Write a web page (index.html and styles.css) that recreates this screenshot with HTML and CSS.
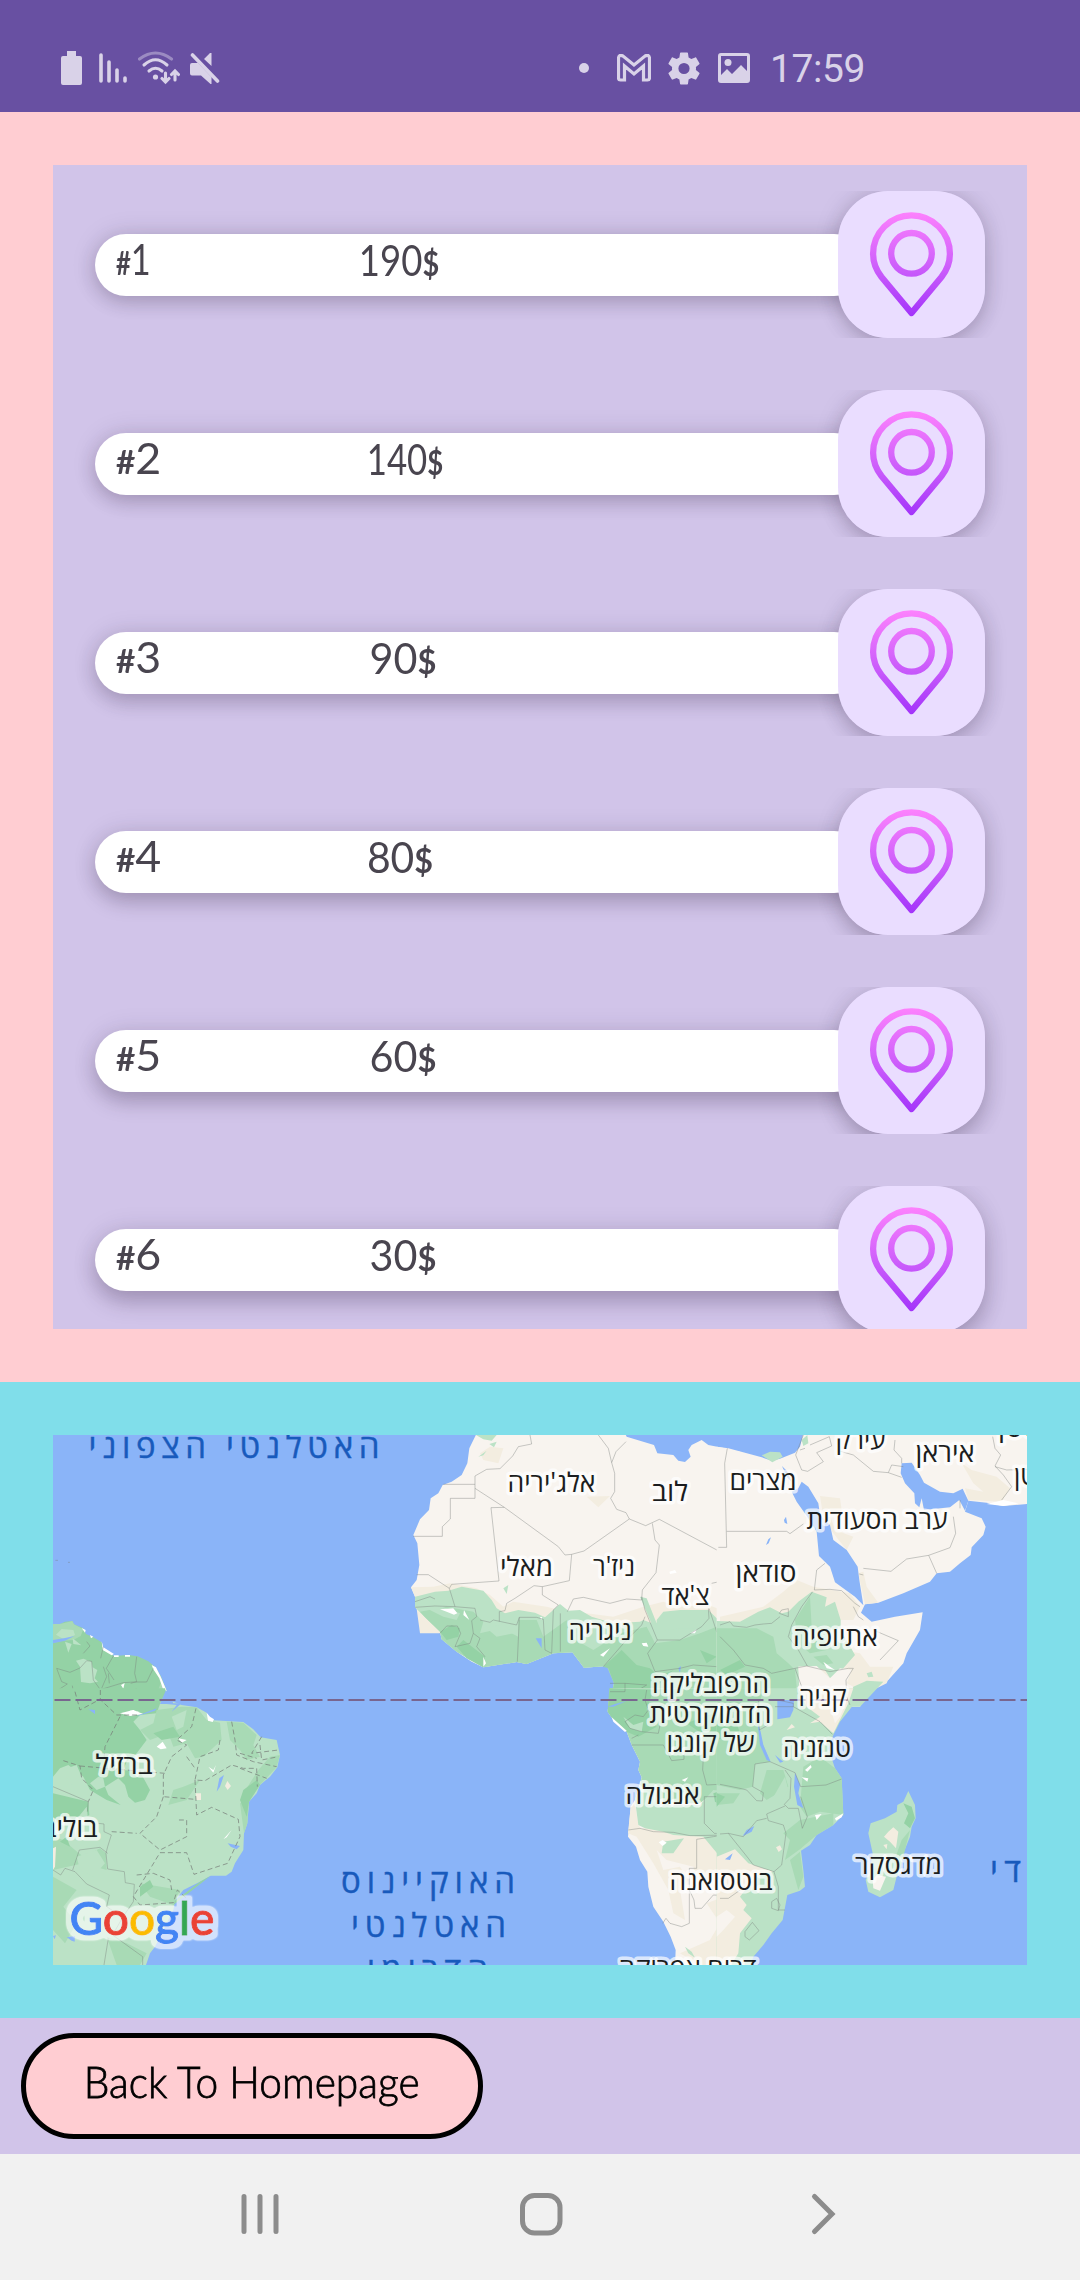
FILE: index.html
```html
<!DOCTYPE html>
<html lang="en">
<head>
<meta charset="utf-8">
<title>Prices</title>
<link rel="stylesheet" href="styles.css">
</head>
<body>
<div class="screen">
  <header class="status">
    <div class="status-left">
      <svg class="ic-battery" viewBox="0 0 21 34" width="21" height="34"><path d="M6 0h9v5h4a2 2 0 0 1 2 2v25a2 2 0 0 1-2 2H2a2 2 0 0 1-2-2V7a2 2 0 0 1 2-2h4z"/></svg>
      <svg class="ic-signal" viewBox="0 0 28 32" width="28" height="32"><path class="ln" d="M2 3v26M10 10v19M18 18v11M26 26v3"/></svg>
      <svg class="ic-wifi" viewBox="0 0 42 34" width="42" height="34"><g class="ln thin"><path opacity=".45" d="M1.500 8Q17.500-4 33.500 8"/><path d="M6 14q11.500-10.500 23 0M11 20q6.500-5.500 13 0"/><path d="M27.500 22v9m-3.500-3.500l3.500 3.500 3.500-3.500M37 29v-9m-3.500 3.500l3.500-3.500 3.500 3.500"/></g><circle cx="17.500" cy="26" r="2.600"/></svg>
      <svg class="ic-mute" viewBox="0 0 30 34" width="30" height="34"><path d="M2 10h6L21.500 24v7h-1L11 22.500H2q-2 0-2-2V12q0-2 2-2zM14 6l6-6h1.500v13z"/><path class="ln" d="M2.500 2l25 26"/></svg>
    </div>
    <div class="status-right">
      <svg class="ic-dot" viewBox="0 0 10 10" width="10" height="10"><circle cx="5" cy="5" r="5"/></svg>
      <svg class="ic-mail" viewBox="0 0 34 28" width="34" height="28"><path class="ln mail" d="M1.500 24V4Q2 0 6 2l11 9L28 2q4-2 4.500 2v20q0 2-2 2h-4V12L17 20 7.500 12v14h-4q-2 0-2-2z"/></svg>
      <svg class="ic-gear" viewBox="2 2 20 20" width="32" height="33"><path d="M19.430 12.980c.04-.32.070-.64.070-.98s-.03-.66-.07-.98l2.110-1.650c.19-.15.240-.42.120-.64l-2-3.460c-.12-.22-.39-.3-.61-.22l-2.490 1c-.52-.4-1.080-.73-1.690-.98l-.38-2.650A.49.490 0 0 0 14 2h-4c-.25 0-.46.180-.49.420l-.38 2.650c-.61.250-1.170.59-1.690.98l-2.490-1c-.23-.09-.49 0-.61.220l-2 3.460c-.13.220-.07.490.12.640l2.110 1.650c-.04.320-.07.650-.07.980s.03.660.070.980l-2.110 1.650c-.19.150-.24.420-.12.640l2 3.460c.12.220.39.300.61.220l2.490-1c.52.400 1.080.73 1.690.98l.38 2.650c.03.240.240.420.49.420h4c.25 0 .46-.18.49-.42l.38-2.650c.61-.25 1.170-.59 1.690-.98l2.490 1c.23.090.49 0 .61-.22l2-3.460c.12-.22.070-.49-.12-.64zM12 15.500a3.500 3.500 0 1 1 0-7 3.500 3.500 0 0 1 0 7z"/></svg>
      <svg class="ic-image" viewBox="0 0 32 30" width="32" height="30"><path fill-rule="evenodd" d="M3 0h26a3 3 0 0 1 3 3v24a3 3 0 0 1-3 3H3a3 3 0 0 1-3-3V3a3 3 0 0 1 3-3zM3 3v19l6-6 5 5 9-9 6 6V3z"/><circle cx="10" cy="9.500" r="3.500"/></svg>
      <span class="clock">17:59</span>
    </div>
  </header>

  <section class="list-area">
    <svg class="defs" width="0" height="0"><defs>
      <linearGradient id="pinFill" gradientUnits="userSpaceOnUse" x1="0" y1="21" x2="0" y2="126"><stop offset="0" stop-color="#fd82fd"/><stop offset=".5" stop-color="#cf60fb"/><stop offset="1" stop-color="#a233fa"/></linearGradient>
      <g id="pin" fill="none" stroke="url(#pinFill)" stroke-width="6.300"><path stroke-linejoin="round" d="M73.500 122L43.500 86C38 79 35.100 71.500 35.100 62.800a38.400 38.400 0 0 1 76.800 0C111.900 71.500 109 79 103.500 86z"/><circle cx="73.500" cy="62.300" r="20.300"/></g>
      <filter id="halo" x="-10%" y="-20%" width="120%" height="140%"><feMorphology in="SourceAlpha" operator="dilate" radius="4"/><feGaussianBlur stdDeviation="1"/><feComponentTransfer result="spread"><feFuncA type="linear" slope="3"/></feComponentTransfer><feFlood flood-color="#fff" flood-opacity=".62"/><feComposite in2="spread" operator="in"/><feMerge><feMergeNode/><feMergeNode in="SourceGraphic"/></feMerge></filter>
    </defs></svg>
    <div class="list">
      <div class="row"><div class="bar e1"><span class="rank r1"><b>#</b>1</span><span class="price">190<i>$</i></span></div><div class="tile e1"><svg viewBox="0 0 147 147"><use href="#pin"/></svg></div></div>
      <div class="row"><div class="bar e2"><span class="rank"><b>#</b>2</span><span class="price p2">140<i>$</i></span></div><div class="tile e2"><svg viewBox="0 0 147 147"><use href="#pin"/></svg></div></div>
      <div class="row"><div class="bar e3"><span class="rank"><b>#</b>3</span><span class="price p3">90<i>$</i></span></div><div class="tile e3"><svg viewBox="0 0 147 147"><use href="#pin"/></svg></div></div>
      <div class="row"><div class="bar e4"><span class="rank"><b>#</b>4</span><span class="price p4">80<i>$</i></span></div><div class="tile e4"><svg viewBox="0 0 147 147"><use href="#pin"/></svg></div></div>
      <div class="row"><div class="bar e5"><span class="rank"><b>#</b>5</span><span class="price p3">60<i>$</i></span></div><div class="tile e5"><svg viewBox="0 0 147 147"><use href="#pin"/></svg></div></div>
      <div class="row"><div class="bar e6"><span class="rank"><b>#</b>6</span><span class="price p3">30<i>$</i></span></div><div class="tile e6"><svg viewBox="0 0 147 147"><use href="#pin"/></svg></div></div>
    </div>
  </section>

  <section class="map-area">
    <svg class="map" viewBox="53 1435 974 530" width="974" height="530">
      <rect class="sea" x="53" y="1435" width="974" height="530"/>
      <!-- northern South America -->
      <g transform="translate(40 1420) scale(.33333)">
        <path class="g3" d="M39 612L60 612 75 605 97 603 102 613 130 625 138 642 160 652 185 667 190 685 215 703 222 708 265 705 293 709 325 724 345 740 362 768 380 812 370 860 39 860z"/>
        <path class="g2" d="M39 612L60 612 97 603 102 613 130 628 122 648 100 660 70 662 39 668z"/>
        <path class="g1" d="M48 644L65 627 100 630 105 645 75 660zM75 665L95 672 85 698zM98 655L124 676 100 672zM108 722L130 716 155 725 158 742 172 750 164 775 174 785 150 790 123 786 120 740z"/>
        <path class="g2" d="M345 740L362 768 380 812 365 840 345 835 362 790z"/>
        <path class="w" d="M125 624L137 630 135 638zM150 645L160 650 153 655zM185 664L190 682 222 702 215 706 188 690zM222 706h14v5h-14zM255 705h15v5h-15zM335 735L348 742 362 770 380 812 374 822 358 775 340 748zM243 795L254 789 250 806z"/>
        <path class="sea" d="M39 660L75 654 103 648 75 662 39 670z"/>
        <path class="bd" d="M50 745L90 757 120 744 140 722 155 724 160 780 181 809 250 788 280 786 320 786 340 745M130 700L150 678 140 665M190 680L182 715M220 708L199 745 222 780M190 740L200 770 185 805M290 710L284 760 290 785 272 790M50 745L65 785 82 792 39 820M181 809V840M97 797L102 830M288 805L310 836M205 760L208 790M46 421h8M84 427h6"/>
      </g>
      <!-- Brazil -->
      <g transform="translate(40 1690) scale(.33333)">
        <path class="g1" d="M39 0L375 0 378 5 370 20 362 36 400 35 425 45 470 52 500 68 510 90 545 92 610 96 640 118 662 142 710 150 720 195 712 232 690 260 660 285 650 310 627 335 622 400 612 430 610 480 585 520 575 545 558 557 512 557 480 575 430 600 405 632 400 660 370 720 345 770 330 790 318 825 39 825z"/>
        <path class="g3" d="M39 -5L375 -5 378 5 362 36 350 70 300 75 280 95 300 120 320 150 290 190 260 215 250 240 300 245 330 300 315 330 285 338 265 320 255 285 235 265 195 290 205 315 242 345 200 330 150 300 130 260 85 225 60 235 39 260zM39 310L145 335 148 375 110 395 85 380 39 405z"/>
        <path class="g2" d="M350 60L425 50 470 52 500 90 540 98 545 150 490 200 465 205 440 160 400 170 385 130 330 150 300 120 340 100zM560 95L610 98 650 135 640 165 660 200 620 210 600 180 570 150zM690 200L720 195 710 232 660 285 627 335 610 310 655 240zM39 440L70 450 105 480 130 500 180 475 198 490 200 540 130 520 39 540zM39 560L110 600 70 650 110 700 75 760 39 720zM200 740L260 760 320 790 300 825 230 825zM300 580L420 600 400 645 330 620zM385 345L440 330 480 270 430 290 400 300zM600 340L627 335 622 400 612 430z"/>
        <path class="g3" d="M610 300L650 270 660 285 627 335 620 380 600 330zM400 645L512 557 480 575 405 632zM340 130L400 110 420 140 365 150zM300 590L330 570 340 590 300 620zM60 455L80 440 90 470z"/>
        <path class="g1" d="M150 280L175 260 190 265 195 290 170 300zM65 240L110 225 125 260 95 285zM395 80L440 60 430 110 410 120zM100 400L140 350 145 400zM110 500L170 480 195 520 160 560 120 540z"/>
        <path class="pale" d="M39 475L48 470 45 530 39 540zM467 310h16v20h-14zM555 288L562 273 573 288 563 300z"/>
        <path class="w" d="M240 70L280 60 310 72 270 78zM500 68L510 80 522 88 518 96 504 92zM350 170L368 155 380 175 362 178zM415 145L440 150 425 158zM505 230L520 240 528 225 520 248zM550 448L575 420 560 442zM270 62L300 64 260 70z"/>
        <path class="sea" d="M378 0L400 40 425 40 395 65 410 45 380 42 360 42zM290 78L350 55 345 62 300 76zM145 58L165 60 165 72zM530 305L538 265 552 255 540 290zM563 460L600 468 590 478 572 470zM80 742L105 738 104 755 95 752zM39 738L48 736 44 748z"/>
        <path class="bd" d="M39 290L145 335 142 365M175 400L192 402V425L214 435 203 470 198 490 203 537 253 545 256 578 283 583 280 635 248 682M39 540L62 555 75 535 105 545 140 582 208 615 200 650 248 682 218 735 308 800V825M98 540L118 480 180 472 203 490M205 745L192 825"/>
        <path class="bd dash" d="M240 80L195 170 192 205M70 212L120 228 125 265 160 300 145 335M105 5L120 60 180 28 230 75 300 75M181 0V30M120 228L375 250M468 55L455 110 410 150 440 165 395 200 370 255 370 320 465 328M465 270L470 375 515 352 595 388 600 440 563 520 462 553 440 488 360 488 280 620 300 645 400 638 412 600 440 625M575 95L585 150 590 195 640 215 710 230M540 150L535 180 480 200 465 270 495 272 575 225 610 235 650 235 652 290M370 320L350 380 300 430 360 480 440 440 440 390 417 390M215 425L290 430M290 555L340 550 390 570 395 600M665 140L635 190 715 180M440 200L465 235M660 165L665 210 715 200M600 190L650 205M600 235L680 265"/>
      </g>
      <!-- west and central Sahara -->
      <g transform="translate(380 1420) scale(.33333)">
        <path class="sand" d="M290 40L268 85 262 130 245 165 215 185 188 195 175 220 152 235 147 270 120 298 100 345 112 370 118 435 110 480 93 502 105 530 105 562 135 592 180 635 185 658 230 695 275 725 310 742 410 726 440 732 520 700 577 697 612 743 680 738 700 762 702 790 690 860 1080 860 1080 95 1042 93 1035 85 985 75 965 60 935 75 925 90 932 110 915 126 895 122 880 105 832 100 822 75 740 50 735 40z"/>
        <path class="pale" d="M93 502L160 500 210 490 290 505 330 525 370 560 400 545 500 560 560 575 620 580 700 590 790 560 850 545 900 560 985 555 1080 590V640H120L105 530zM620 230L690 228 655 262zM300 100L330 80 370 85 355 130 310 120z"/>
        <path class="g1" d="M105 530L165 515 205 512 245 500 310 512 335 540 350 565 375 580 415 570 465 578 495 592 540 552 565 572 600 570 635 590 700 610 780 605 790 600 830 615 830 600 850 575 900 570 985 570 1010 595 1080 603 1080 860 690 860 702 790 700 762 680 738 612 743 577 697 520 700 440 732 410 726 310 742 230 695 185 658 180 635 135 592 105 562zM288 45L350 45 335 62 310 58zM328 72L350 65 342 82zM295 110L320 92 310 106zM370 505L385 495 380 522zM780 530L800 535 832 615 815 612z"/>
        <path class="g2" d="M120 575L200 560 280 575 310 605 300 640 365 625 415 650 415 600 470 600 490 650 560 600 570 650 640 690 720 640 800 620 825 670 900 660 960 640 1010 620 1080 640V860H690L702 790 680 738 612 743 577 697 520 700 440 732 410 726 310 742 230 695 185 658 180 635 135 592z"/>
        <path class="g1" d="M130 560L185 560 240 580 230 600 190 590zM320 625L370 612 400 640 350 650zM590 630L640 625 630 660 600 655zM820 640L900 625 980 625 930 640 830 668z"/>
        <path class="g3" d="M180 635L215 615 240 625 235 650 200 660zM230 680L250 660 315 710 310 742 260 715zM670 740L725 690 770 735 810 745 840 770 880 750 830 800 800 860H690L702 790 685 745zM960 690L1010 710 980 730z"/>
        <path class="w" d="M180 568L220 565 232 580 222 584 200 575zM252 570L268 600 250 585zM868 455L885 450 890 458 870 462zM310 710L318 730 310 740zM660 705L690 685 670 710zM785 670L800 668 805 680 790 678zM930 640L950 628 945 640zM480 592L487 590 484 600z"/>
        <path class="sea" d="M467 655L485 655 485 685zM895 745L903 738 900 758z"/>
        <path class="bd" d="M450 45L455 72 415 80 398 108 360 146 320 148 285 168V235H211V297L187 320V349H100M190 193H285M285 205L373 262 535 380 555 405 575 403 612 393 748 297 738 278 710 268 692 235 704 215V160L695 128 708 95 738 65M655 45L685 85 695 128M373 262L333 263 357 483 215 493 208 505 145 464 110 464M575 403L568 482 487 500 462 497 405 535 380 550 375 572 358 575V605M487 500V525L535 555 520 570 515 700M748 297L797 317 838 298 1018 394M1040 335H1080M1042 85L1034 130 1040 382 1018 383V485L995 490M817 310L825 360 838 375 828 458 787 510 785 540 740 537 690 550 610 532 580 537 562 575M785 530L795 570 832 660 900 660 965 620 987 595 985 565M208 505L225 560 285 565 290 590 275 602 280 640 300 655 290 680 315 710M105 545L150 530 165 537M105 562L165 558 225 560M180 640L200 618 232 618 242 640 225 680 270 670 280 640M300 600L330 607 340 600 410 615 418 592 470 592 490 598 495 690 515 700M418 592L412 725M541 695V580M670 740L735 665 785 615 795 590M832 660L803 700 825 755M825 755L900 745 940 735 1010 740 1080 720M1010 635L1080 700M1010 635L1080 605M690 790H735V815H695M735 790L800 795 775 810 800 830 790 850M987 565L1010 635"/>
      </g>
      <!-- Egypt to Arabia -->
      <g transform="translate(720 1420) scale(.33333)">
        <path class="sand" d="M-10 80L25 85 125 112 155 122 180 116 225 98 240 80 250 40 921 40 921 252 850 258 800 248 745 242 735 275 785 295 797 320 790 345 755 382 752 405 720 430 690 455 650 460 630 485 550 520 475 548 435 553 423 578 455 605 525 590 608 577 600 630 560 700 550 730 505 780 440 820 420 860 -10 860z"/>
        <path class="pale" d="M300 228L360 235 365 270 330 285 345 330 400 350 380 390 340 340 310 290zM415 460L430 455 440 500 475 548 435 553zM725 130L755 150 830 170 870 205 845 245 745 240 735 205 790 215 760 190zM130 560L190 515 230 480 280 500 390 520 420 560 400 600 350 600 360 690 420 700 450 740 520 740 500 790 440 820 300 860 150 740 0 640V590zM650 60L690 80 730 75 700 100z"/>
        <path class="g1" d="M-10 603L60 605 115 575 150 562 185 580 205 575 235 545 275 515 320 532 315 560 345 545 362 600 362 630 405 705 370 745 330 775 315 750 260 738 235 740 240 790 200 860 -10 860zM125 106L150 95 180 97 188 110 157 127zM245 60L262 45 265 70 250 78zM390 805L440 782 490 785 420 860 380 860zM440 760L455 755 460 770 445 772z"/>
        <path class="g2" d="M-10 625L110 625 160 650 170 700 205 730 225 750 230 800 190 860 -10 860zM225 600L270 530 275 620 310 650 320 690 270 700 235 670zM280 710L320 705 340 730 310 735z"/>
        <path class="g3" d="M0 750L60 720 75 740 20 765z"/>
        <path class="sandf" d="M235 740L290 738 330 775 360 745 395 750 380 790 400 800 380 860 240 860z"/>
        <path class="w" d="M310 725L330 740 345 750 320 745zM800 252L850 240 895 250 850 258z"/>
        <path class="sea" d="M245 185L265 200 295 250 300 285 330 315 340 360 380 390 413 440 418 480 430 556 405 530 345 487 330 440 297 408 290 335 262 290 230 245 215 215 235 205zM545 130L575 128 600 165 612 188 660 215 700 220 728 206 745 242 735 272 718 240 690 262 612 270 605 235 598 262 585 250 583 220 555 190 542 160zM186 138L200 152 215 185 200 170zM192 300L198 290 202 312 194 308zM138 375L145 358 153 352 146 370z"/>
        <path class="bd" d="M22 85L14 130 20 382H-5M20 334H200L210 341 250 312M250 45L227 105 245 150 263 154 310 125 290 98 335 78 328 50 270 75M355 92L400 105 460 154 505 158 545 172M505 158L515 135 550 140M525 60L522 90 545 115 545 130M430 445L513 454 560 417 626 406 690 383 707 340 700 290M626 406L650 460M315 430L290 450 283 510 330 508 365 512 405 550 420 560M418 462L430 465M818 50L825 85 842 105 825 138 850 165 875 200 845 240M825 140L860 150 921 148M278 515L245 560 215 615 205 650M185 570L205 566V590M185 570L178 580 205 590M0 615L30 605 40 618 80 622 105 615 130 612 155 610 180 590M0 650L40 690 75 735 130 745 155 760 225 745 260 738 330 755 385 745 400 745M205 650L235 690 262 738M460 630L535 662 480 720M400 560L415 590 430 600M400 745L378 780 380 830M720 240V265M225 745L245 800M240 90L255 85"/>
      </g>
      <!-- Congo, Angola, Namibia -->
      <g transform="translate(380 1690) scale(.33333)">
        <path class="sand" d="M690 -5L683 65 700 90 740 125 755 165 780 215 775 240 785 262 765 330 752 350 744 440 768 470 780 510 802 545 805 590 820 650 850 695 872 740 887 780 885 830 1085 830 1085 -5z"/>
        <path class="pale" d="M765 340L775 405 790 425 820 440 790 430 830 480 850 540 900 530 925 570 900 600 915 690 880 670 865 600 820 520 770 440 744 430 752 350zM770 420L830 405 910 430 1085 440V570L950 570 940 530 860 510zM980 640L1085 600V825H960L900 790 990 750 1020 700z"/>
        <path class="g2" d="M690 -5L683 65 700 90 740 125 755 165 780 215 775 240 785 262 770 330 830 340 960 340 1000 310 1085 330V-5z"/>
        <path class="g1" d="M780 290L765 330 775 405 795 415 850 425 880 435 970 440 1020 500 1085 515V310L1000 300 960 345 870 345zM845 490L850 455 912 445 880 490zM915 770L935 785 945 803 925 790zM1040 795L1085 760V825z"/>
        <path class="g3" d="M688 -5L683 65 700 90 740 125 775 140 830 110 800 60 820 0zM1000 310L1030 300 1050 330 1030 350 1005 335zM920 100L1000 70 1085 120 1085 150 980 140z"/>
        <path class="g1" d="M730 80L760 105 790 95 785 125 750 115z"/>
        <path class="w" d="M836 457L848 450 860 458 848 468zM695 82L740 122 735 126 700 95zM905 270L925 262 915 275z"/>
        <path class="sea" d="M1035 505L1052 492 1050 510zM683 50L705 42 740 33 700 50z"/>
        <path class="bd" d="M690 5H735V-5M800 0L795 30 805 60 790 80 765 75 735 95 750 115 785 125 835 130 840 105M755 165H850L875 212 912 208V185M755 145L775 135M970 200L968 240 980 285 1018 283V320H973V400L1003 430 1045 432 1085 480M745 420L780 415 820 425 880 427 930 437 1045 435M1020 285L1085 300M950 535V448L1000 440 1045 432M928 535V700L905 710 870 700 858 685 848 700M928 535H950M928 600L942 630 945 655H965L1000 615 1085 620"/>
      </g>
      <!-- east coast and Madagascar -->
      <g transform="translate(720 1690) scale(.33333)">
        <path class="g1" d="M-10 -5L455 -5 400 45 360 95 340 135 325 175 345 235 365 265 370 375 340 405 290 435 270 465 243 482 250 540 255 590 240 602 202 615 188 690 155 730 130 765 100 800 90 830 -10 830zM565 303L585 345 587 385 575 410 570 440 550 490 535 540 520 600 480 622 445 605 437 570 450 540 458 490 445 430 452 400 495 385 530 365 532 345 550 335z"/>
        <path class="g2" d="M-10 -5H130L115 60 120 140 150 215 105 222 98 290 60 300 -10 285zM250 230L300 200 345 235 365 265 370 375 300 365 260 380 240 350 245 290zM240 390L340 370 340 405 290 435 240 478 195 510 210 450 190 430zM-10 310L60 310 40 340 -10 345zM210 510L240 485 250 560 235 600zM140 240L190 240 205 290 140 330 120 310z"/>
        <path class="g1" d="M155 330L195 260 205 300 190 330z"/>
        <path class="g3" d="M550 340L575 350 585 385 570 415 552 400 565 370zM-10 310L15 320 -10 350zM-10 60L50 100 60 130 -10 150z"/>
        <path class="g2" d="M570 420L540 540 530 560 520 520 545 450z"/>
        <path class="pale" d="M-10 500L45 478 85 520 160 545 110 555 60 620 80 645 70 660 95 685 60 730 55 790 30 830 -10 830zM235 -5L400 -5 385 40 340 130 300 95 270 100 300 80 260 50zM200 120L215 102 225 112zM505 425L520 412 535 425 528 475 510 455 492 440zM490 465L502 462 500 478zM168 472L180 466 186 478 176 486z"/>
        <path class="sand" d="M-10 680L20 660 45 680 10 720 -10 740zM458 570L470 555 498 560 480 602 460 595zM330 50L385 20 360 80 345 100z"/>
        <path class="w" d="M255 240L272 225 275 232 262 245zM245 262L265 265 262 275zM285 375L305 372 290 390zM345 385L370 370 365 382 348 392z"/>
        <path class="sea" d="M172 30H222L220 60 210 82 172 88zM113 100L122 125 130 165 152 215 140 210 120 165zM225 248L240 285 235 310 250 355 232 345 222 290zM68 438L80 420 103 408 95 425 75 435zM15 508L38 490 30 510zM165 195L190 215 180 218z"/>
        <path class="bd" d="M115 30L118 120 145 105M172 30L220 40V50H165M220 50L300 95 337 133M390 45L380 20M150 215L105 222 98 290 130 308 127 333 110 332 80 300 60 295 0 283M150 215L225 248 242 290 318 285 365 267M195 240L213 265 210 325 193 343 205 355 235 355 247 415 262 380 242 320M195 348L140 372 145 392 190 405 198 430 185 525 162 545 175 590V660H195M0 432L25 430 70 440 110 392 140 385M25 430L85 505 100 525 162 545M155 635L170 625 180 645 175 662 155 655zM75 725L97 697 117 722 88 750 75 740zM0 625L25 625 75 590"/>
      </g>
      <path class="equator" d="M54.500 1700H1027"/>
      <g class="ocean">
        <text x="234" y="1457.500" textLength="291">האטלנטי הצפוני</text>
        <text x="428" y="1893" textLength="174">האוקיינוס</text>
        <text x="428.500" y="1936.500" textLength="155">האטלנטי</text>
        <text x="427.500" y="1980.500" textLength="121">הדרומי</text>
        <text x="1005.500" y="1881.500" textLength="31">די</text>
      </g>
      <g class="country">
        <text x="551.500" y="1492" textLength="88" lengthAdjust="spacingAndGlyphs">אלג'יריה</text>
        <text x="670" y="1501" textLength="36" lengthAdjust="spacingAndGlyphs">לוב</text>
        <text x="763" y="1490" textLength="67" lengthAdjust="spacingAndGlyphs">מצרים</text>
        <text x="860.500" y="1448.500" textLength="50" lengthAdjust="spacingAndGlyphs">עירק</text>
        <text x="945" y="1462" textLength="59" lengthAdjust="spacingAndGlyphs">איראן</text>
        <text x="1019" y="1437" textLength="42" lengthAdjust="spacingAndGlyphs">סטן</text>
        <text x="1051" y="1485" textLength="74" lengthAdjust="spacingAndGlyphs">פקיסטן</text>
        <text x="877" y="1528.500" textLength="141" lengthAdjust="spacingAndGlyphs">ערב הסעודית</text>
        <text x="766" y="1582" textLength="61" lengthAdjust="spacingAndGlyphs">סודאן</text>
        <text x="835.500" y="1645.500" textLength="85" lengthAdjust="spacingAndGlyphs">אתיופיה</text>
        <text x="526.500" y="1575.500" textLength="53" lengthAdjust="spacingAndGlyphs">מאלי</text>
        <text x="614" y="1576" textLength="42" lengthAdjust="spacingAndGlyphs">ניז'ר</text>
        <text x="685.500" y="1605" textLength="48" lengthAdjust="spacingAndGlyphs">צ'אד</text>
        <text x="600" y="1639.500" textLength="63" lengthAdjust="spacingAndGlyphs">ניגריה</text>
        <text x="710.500" y="1692.500" textLength="117" lengthAdjust="spacingAndGlyphs">הרפובליקה</text>
        <text x="710.500" y="1722.500" textLength="122" lengthAdjust="spacingAndGlyphs">הדמוקרטית</text>
        <text x="710.500" y="1752" textLength="88" lengthAdjust="spacingAndGlyphs">של קונגו</text>
        <text x="822.500" y="1706" textLength="48" lengthAdjust="spacingAndGlyphs">קניה</text>
        <text x="817" y="1757" textLength="68" lengthAdjust="spacingAndGlyphs">טנזניה</text>
        <text x="662.500" y="1804" textLength="74" lengthAdjust="spacingAndGlyphs">אנגולה</text>
        <text x="721" y="1889.500" textLength="103" lengthAdjust="spacingAndGlyphs">בוטסואנה</text>
        <text x="898.500" y="1873.500" textLength="87" lengthAdjust="spacingAndGlyphs">מדגסקר</text>
        <text x="687.500" y="1976.500" textLength="138" lengthAdjust="spacingAndGlyphs">דרום אפריקה</text>
        <text x="124" y="1774" textLength="57" lengthAdjust="spacingAndGlyphs">ברזיל</text>
        <text x="58" y="1837" textLength="79" lengthAdjust="spacingAndGlyphs">בוליביה</text>
      </g>
      <text class="brand" filter="url(#halo)" x="69.500" y="1934.500" textLength="145" lengthAdjust="spacingAndGlyphs"><tspan class="b">G</tspan><tspan class="r">o</tspan><tspan class="y">o</tspan><tspan class="b">g</tspan><tspan class="gr">l</tspan><tspan class="r">e</tspan></text>
    </svg>
  </section>

  <section class="actions"><button class="back" type="button"><span>Back To Homepage</span></button></section>

  <nav class="nav">
    <svg viewBox="0 0 60 60" width="60" height="60"><path d="M13 12.500v35M29 12.500v35M45 12.500v35"/></svg>
    <svg viewBox="0 0 60 60" width="60" height="60"><rect x="12.500" y="11.500" width="37.500" height="37.500" rx="12"/></svg>
    <svg viewBox="0 0 60 60" width="60" height="60"><path d="M25.500 12.500L43 30 25.500 47.500"/></svg>
  </nav>
</div>
</body>
</html>
```

FILE: styles.css
```css
* { box-sizing: border-box; }
body { margin: 0; }
.screen { width: 1080px; height: 2280px; display: flex; flex-direction: column; overflow: hidden; font-family: Lato, sans-serif; }
svg { display: block; flex: none; }

.status { height: 112px; flex: none; background: #6850a2; display: flex; padding: 51px 0 0 61px; fill: #d9d2e8; color: #d9d2e8; }
.status-left, .status-right { display: flex; align-items: flex-start; }
.status-left { width: 518px; }
.ic-signal { margin: 1px 0 0 17px; }
.ic-wifi { margin: 0 0 0 11px; }
.ic-mute { margin: 2px 0 0 10px; }
.ic-dot { margin: 12px 0 0; }
.ic-mail { margin: 3px 0 0 28px; }
.ic-gear { margin: 1px 0 0 17px; }
.ic-image { margin: 2px 0 0 18px; }
.ln { fill: none; stroke: #d9d2e8; stroke-width: 3.6; stroke-linecap: round; }
.thin { stroke-width: 3.1; }
.mail { stroke-width: 3.2; }
.clock { margin-left: 20px; margin-top: -1px; font: 39px/39px Roboto, sans-serif; letter-spacing: -.4px; }

.list-area { height: 1270px; flex: none; background: #ffcdd2; padding: 53px; }
.defs { position: absolute; }
.list { height: 1164px; background: #d1c4e9; overflow: hidden; padding: 26px 42px; display: flex; flex-direction: column; gap: 52px; }
.row { height: 147px; flex: none; display: flex; align-items: center; overflow: clip; margin: 0 -42px; padding: 0 42px; isolation: isolate; }
.bar { position: relative; z-index: 1; flex: none; width: 770px; height: 62px; margin-right: -27px; padding-bottom: 7px; border-radius: 31px; background: #fff; display: flex; align-items: center; color: #49454f; font-size: 43px; line-height: 50px; }
.tile { flex: none; width: 147px; height: 147px; border-radius: 50px; }
.tile svg { position: relative; z-index: 2; width: 147px; height: 147px; border-radius: 50px; background: #eaddff; }
.e1 { box-shadow: 0 6px 18px rgba(50, 35, 65, .22), 0 0 26px rgba(50, 35, 65, .13); }
.e2 { box-shadow: 0 7px 18px rgba(50, 35, 65, .23), 0 0 26px rgba(50, 35, 65, .12); }
.e3 { box-shadow: 0 8px 19px rgba(50, 35, 65, .24), 0 0 26px rgba(50, 35, 65, .11); }
.e4 { box-shadow: 0 9px 19px rgba(50, 35, 65, .25), 0 0 26px rgba(50, 35, 65, .11); }
.e5 { box-shadow: 0 10px 20px rgba(50, 35, 65, .26), 0 0 26px rgba(50, 35, 65, .1); }
.e6 { box-shadow: 0 11px 21px rgba(50, 35, 65, .27), 0 0 26px rgba(50, 35, 65, .1); }
.rank, .price { white-space: nowrap; }
.rank { width: 160px; margin-left: 21px; transform: scaleX(1.04); transform-origin: 0 50%; }
.r1 { transform: scaleX(.8); }
.rank b { font-size: 32px; font-weight: 700; }
.price { width: 240px; text-align: center; margin-left: 3px; transform: scaleX(.85); }
.p2 { margin-left: 9px; transform: scaleX(.81); }
.p3 { margin-left: 7px; transform: scaleX(.96); }
.p4 { margin-left: 4px; transform: scaleX(.95); }
.price i { font-style: normal; font-size: 34px; font-weight: 700; }

.map-area { height: 636px; flex: none; background: #80deea; padding: 53px; }
.sea { fill: #8ab4f8; }
.sand, .sandf { fill: #f8f4ef; }
.pale { fill: #f3ede0; }
.g1 { fill: #bbe2c6; }
.g2 { fill: #a8dab5; }
.g3 { fill: #94d2a5; }
.w { fill: #fff; }
.bd { fill: none; stroke: #777c78; stroke-opacity: .6; stroke-width: 2; stroke-linejoin: round; }
.dash { stroke-width: 2.7; stroke-dasharray: 15 9; stroke-opacity: .8; }
.equator { stroke: #79668f; stroke-width: 2; stroke-dasharray: 16 5; }
.map text { font-family: "Open Sans", "Noto Sans", sans-serif; }
.ocean, .country { text-anchor: middle; direction: rtl; }
.ocean { font-size: 33px; fill: #185abc; stroke: #185abc; stroke-width: .4px; }
.country { font-size: 27px; fill: #1b1d20; stroke: #fff; stroke-opacity: .7; stroke-width: 7px; stroke-linejoin: round; paint-order: stroke; }
.map .brand { font-family: Lato, sans-serif; font-size: 47px; font-weight: 500; }
.b { fill: #4285f4; stroke: #4285f4; }
.r { fill: #ea4335; stroke: #ea4335; }
.y { fill: #fbbc05; stroke: #fbbc05; }
.gr { fill: #34a853; stroke: #34a853; }

.actions { height: 136px; flex: none; background: #d1c4e9; padding: 15px 21px; }
.back { display: flex; align-items: center; justify-content: center; width: 462px; height: 106px; padding: 0 0 8px; border: 5px solid #000; border-radius: 53px; background: #ffcdd2; color: #000; font: 300 43px/50px Lato, sans-serif; }
.back span { white-space: nowrap; -webkit-text-stroke: .8px #000; transform: scaleX(.945); }

.nav { flex: 1; background: #f1f1f1; display: flex; justify-content: space-between; padding: 30px 231px 0; }
.nav svg { fill: none; stroke: #8c8c8c; stroke-width: 5; stroke-linecap: round; }
```
